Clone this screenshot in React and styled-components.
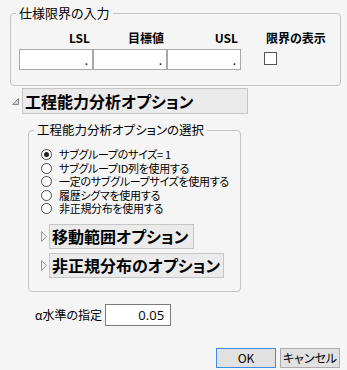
import React from "react"
import styled, { createGlobalStyle } from "styled-components"

const Global = createGlobalStyle`
  html, body {
    margin: 0;
    background: #f5f5f5;
  }
  body {
    font-family: "Noto Sans CJK JP", "Open Sans", sans-serif;
    font-feature-settings: "palt";
    color: #000;
  }
`

const Page = styled.div`
  width: 347px;
  height: 370px;
  padding-top: 5px;
  box-sizing: border-box;
  display: flex;
  flex-direction: column;
`

const Group = styled.fieldset`
  margin: ${p => p.$margin};
  padding: 0;
  width: ${p => p.$width}px;
  box-sizing: border-box;
  min-width: 0;
  border: 1px solid #c4c4c4;
  border-radius: 4px;
`

const GroupBody = styled.div`
  padding: ${p => p.$pad};
`

const Legend = styled.legend`
  margin-left: 5px;
  padding: 0 3px;
  font-size: ${p => p.$size}px;
  line-height: ${p => p.$lh}px;
`

const LimitGrid = styled.div`
  display: grid;
  grid-template-columns: 74px 74px 74px 70px;
  row-gap: 4px;
`

const ColHead = styled.div`
  font-weight: bold;
  font-size: 12px;
  line-height: 14px;
  text-align: ${p => (p.$left ? "left" : "right")};
  padding-right: 3px;
  padding-left: ${p => (p.$left ? "2px" : "0")};
  margin-left: ${p => (p.$left ? "23px" : "0")};
  white-space: nowrap;
`

const NumBox = styled.div`
  height: 21px;
  box-sizing: border-box;
  border: 1px solid #a8a8a8;
  background: #fff;
  display: flex;
  align-items: flex-end;
  justify-content: flex-end;
  padding: 0 4px 2px 0;
  font-size: 12px;
  line-height: 14px;
`

const CheckCell = styled.div`
  margin-left: 23px;
  padding-top: 3px;
`

const Check = styled.span`
  display: block;
  width: 13px;
  height: 13px;
  box-sizing: border-box;
  border: 1px solid #555;
  background: #fff;
`

const OutlineRow = styled.div`
  display: flex;
  align-items: center;
  gap: ${p => p.$gap}px;
  margin: ${p => p.$margin};
`

const OutlineBox = styled.div`
  width: ${p => p.$width}px;
  height: ${p => p.$height}px;
  box-sizing: border-box;
  border: 1px solid #c6c6c6;
  background: #ebebeb;
  font-weight: bold;
  font-size: 16px;
  line-height: ${p => p.$height - 2}px;
  padding-left: 2px;
  white-space: nowrap;
`

const RadioList = styled.div`
  display: flex;
  flex-direction: column;
`

const RadioRow = styled.label`
  display: flex;
  align-items: center;
  height: 13.5px;
  line-height: 13.5px;
  font-size: 11px;
  letter-spacing: -0.3px;
  white-space: nowrap;
`

const RadioDot = styled.span`
  width: 11px;
  height: 11px;
  box-sizing: border-box;
  border-radius: 50%;
  border: 1px solid #4a4a4a;
  background: #fff;
  margin-right: 7px;
  flex: none;
  display: flex;
  align-items: center;
  justify-content: center;
  &::after {
    content: "";
    width: 5px;
    height: 5px;
    border-radius: 50%;
    background: ${p => (p.$on ? "#222" : "transparent")};
  }
`

const SubOptions = styled.div`
  display: flex;
  flex-direction: column;
  gap: 4px;
  margin-top: 8px;
`

const AlphaRow = styled.div`
  display: flex;
  align-items: center;
  gap: 3px;
  margin: 12px 0 0 35px;
  font-size: 12px;
`

const AlphaInput = styled.div`
  width: 66px;
  height: 22px;
  box-sizing: border-box;
  border: 1px solid #7a7a7a;
  background: #fff;
  font-size: 13px;
  line-height: 20px;
  text-align: right;
  padding-right: 6px;
  font-family: "Open Sans", sans-serif;
`

const ButtonBar = styled.div`
  display: flex;
  justify-content: flex-end;
  gap: 4px;
  margin-top: 22px;
  padding-right: 7px;
`

const Button = styled.div`
  width: 60px;
  height: 20px;
  box-sizing: border-box;
  border: 1px solid ${p => (p.$primary ? "#3c8fe0" : "#adadad")};
  background: #e1e1e1;
  font-size: 12px;
  line-height: 18px;
  text-align: center;
`

const Corner = () => (
  <svg width="7" height="7" viewBox="0 0 7 7">
    <polygon points="6.5,0.5 6.5,6.5 0.5,6.5" fill="#d4d4d4" stroke="#8a8a8a" strokeWidth="1" />
  </svg>
)

const Arrow = () => (
  <svg width="6" height="11" viewBox="0 0 6 11">
    <polygon points="0.5,0.5 5.5,5.5 0.5,10.5" fill="#f0f0f0" stroke="#9a9a9a" strokeWidth="1" />
  </svg>
)

const methods = [
  "サブグループのサイズ= 1",
  "サブグループID列を使用する",
  "一定のサブグループサイズを使用する",
  "履歴シグマを使用する",
  "非正規分布を使用する",
]

export default function App() {
  return (
    <Page>
      <Global />
      <Group $margin="0 0 0 10px" $width={331}>
        <Legend $size={13} $lh={16}>仕様限界の入力</Legend>
        <GroupBody $pad="10px 0 15px 8px">
          <LimitGrid>
            <ColHead>LSL</ColHead>
            <ColHead>目標値</ColHead>
            <ColHead>USL</ColHead>
            <ColHead $left>限界の表示</ColHead>
            <NumBox>.</NumBox>
            <NumBox>.</NumBox>
            <NumBox>.</NumBox>
            <CheckCell>
              <Check />
            </CheckCell>
          </LimitGrid>
        </GroupBody>
      </Group>

      <OutlineRow $gap={3} $margin="2px 0 0 12px">
        <Corner />
        <OutlineBox $width={226} $height={26}>工程能力分析オプション</OutlineBox>
      </OutlineRow>

      <Group $margin="9px 0 0 28px" $width={213}>
        <Legend $size={12.5} $lh={14}>工程能力分析オプションの選択</Legend>
        <GroupBody $pad="11px 0 13px 12px">
          <RadioList>
            {methods.map((m, i) => (
              <RadioRow key={m}>
                <RadioDot $on={i === 0} />
                {m}
              </RadioRow>
            ))}
          </RadioList>
          <SubOptions>
            <OutlineRow $gap={2} $margin="0">
              <Arrow />
              <OutlineBox $width={145} $height={25}>移動範囲オプション</OutlineBox>
            </OutlineRow>
            <OutlineRow $gap={2} $margin="0">
              <Arrow />
              <OutlineBox $width={175} $height={25}>非正規分布のオプション</OutlineBox>
            </OutlineRow>
          </SubOptions>
        </GroupBody>
      </Group>

      <AlphaRow>
        <span>α水準の指定</span>
        <AlphaInput>0.05</AlphaInput>
      </AlphaRow>

      <ButtonBar>
        <Button $primary>OK</Button>
        <Button>キャンセル</Button>
      </ButtonBar>
    </Page>
  )
}
